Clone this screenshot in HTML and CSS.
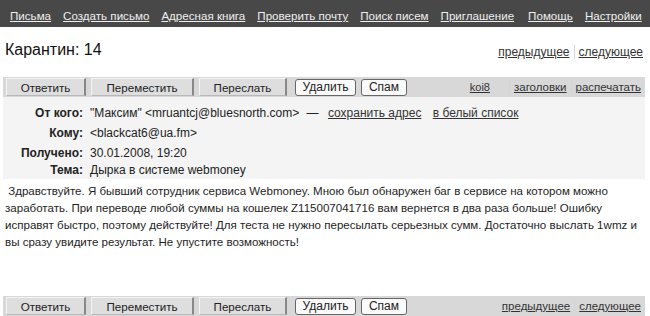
FILE: index.html
```html
<!DOCTYPE html>
<html lang="ru">
<head>
<meta charset="utf-8">
<title>Карантин</title>
<link rel="stylesheet" href="styles.css">
</head>
<body>
<div class="nav">
  <a href="#">Письма</a>
  <a href="#">Создать письмо</a>
  <a href="#">Адресная книга</a>
  <a href="#">Проверить почту</a>
  <a href="#">Поиск писем</a>
  <a href="#">Приглашение</a>
  <a href="#" class="help">Помощь</a>
  <a href="#">Настройки</a>
</div>
<div class="titlebar">
  <h1 class="title">Карантин: 14</h1>
  <div class="pager">
    <a href="#">предыдущее</a><span class="sep"></span><a href="#">следующее</a>
  </div>
</div>
<div class="toolbar">
  <div class="btns">
    <span class="btn gray w1">Ответить</span>
    <span class="btn gray w2">Переместить</span>
    <span class="btn gray w3">Переслать</span>
    <span class="btn white w4">Удалить</span>
    <span class="btn white w5">Спам</span>
  </div>
  <div class="tools">
    <a href="#" class="koi">koi8</a><span class="sep"></span><a href="#">заголовки</a><span class="sep"></span><a href="#">распечатать</a>
  </div>
</div>
<div class="headers">
  <div class="row"><span class="lbl">От кого:</span><span class="val">"Максим" &lt;mruantcj@bluesnorth.com&gt; <span class="dash">—</span> <a href="#">сохранить адрес</a> <a href="#" class="wl">в белый список</a></span></div>
  <div class="row"><span class="lbl">Кому:</span><span class="val">&lt;blackcat6@ua.fm&gt;</span></div>
  <div class="row"><span class="lbl">Получено:</span><span class="val">30.01.2008, 19:20</span></div>
  <div class="row last"><span class="lbl">Тема:</span><span class="val">Дырка в системе webmoney</span></div>
</div>
<div class="body">
  <p class="line">&nbsp;Здравствуйте. Я бывший сотрудник сервиса Webmoney. Мною был обнаружен баг в сервисе на котором можно</p>
  <p class="line">заработать. При переводе любой суммы на кошелек Z115007041716 вам вернется в два раза больше! Ошибку</p>
  <p class="line">исправят быстро, поэтому действуйте! Для теста не нужно пересылать серьезных сумм. Достаточно выслать 1wmz и</p>
  <p class="line">вы сразу увидите результат. Не упустите возможность!</p>
</div>
<div class="toolbar bottom">
  <div class="btns">
    <span class="btn gray w1">Ответить</span>
    <span class="btn gray w2">Переместить</span>
    <span class="btn gray w3">Переслать</span>
    <span class="btn white w4">Удалить</span>
    <span class="btn white w5">Спам</span>
  </div>
  <div class="tools">
    <a href="#">предыдущее</a><span class="sep"></span><a href="#">следующее</a>
  </div>
</div>
</body>
</html>
```
FILE: styles.css
```css
html, body {
  margin: 0;
  padding: 0;
  background: #fff;
}
body {
  font-family: "Liberation Sans", Arial, sans-serif;
  font-size: 12px;
  color: #222;
  width: 650px;
  overflow: hidden;
}
a {
  color: #333;
  text-decoration: underline;
}
.nav {
  background: #484848;
  height: 27px;
  display: flex;
  align-items: flex-end;
  padding: 0 0 4px 10px;
  box-sizing: border-box;
  gap: 12px;
}
.nav a {
  color: #eee;
  font-size: 11.6px;
  line-height: 14px;
  white-space: nowrap;
}
.nav a.help {
  margin-left: 2px;
}
.titlebar {
  display: flex;
  justify-content: space-between;
  align-items: flex-end;
  height: 50px;
  padding: 0 7px 0 5px;
  box-sizing: border-box;
}
.title {
  margin: 0 0 18px 0;
  font-size: 16px;
  font-weight: normal;
  color: #111;
  line-height: 18px;
}
.pager {
  display: flex;
  align-items: center;
  margin-bottom: 18px;
}
.sep {
  display: inline-block;
  width: 1px;
  height: 14px;
  background: #d4d4d4;
  margin: 0 4px;
}
.toolbar {
  margin: 0 5px 0 3px;
  height: 20px;
  background: #d8d8d8;
  display: flex;
  justify-content: space-between;
  align-items: center;
}
.btns {
  display: flex;
  align-items: center;
  padding-left: 3px;
}
.btn {
  box-sizing: border-box;
  height: 18px;
  display: inline-flex;
  align-items: center;
  justify-content: center;
  font-size: 12px;
  color: #222;
  margin-right: 5px;
}
.btn.gray {
  background: #dedede;
  border-top: 1px solid #f4f4f4;
  border-left: 1px solid #f4f4f4;
  border-right: 2px solid #888;
  border-bottom: 1px solid #b8b8b8;
  font-size: 11.6px;
}
.btn.white {
  background: #fafafa;
  border: 1px solid #666;
  border-radius: 3px;
  height: 17px;
}
.w1 { width: 80px; }
.w2 { width: 103px; }
.w3 { width: 88px; margin-right: 8px; }
.w4 { width: 61px; }
.w5 { width: 46px; }
.tools {
  display: flex;
  align-items: center;
  padding-right: 4px;
  font-size: 11.5px;
}
.tools .koi {
  font-size: 11px;
  margin-right: 15px;
}
.headers {
  margin: 0 5px 0 3px;
  background: #f4f4f4;
  padding: 6px 0 3px 0;
}
.row {
  display: flex;
  align-items: center;
  height: 20px;
}
.row.last {
  height: 13px;
}
.lbl {
  width: 80px;
  text-align: right;
  font-weight: bold;
  color: #222;
}
.val {
  padding-left: 7px;
  color: #222;
}
.dash {
  margin: 0 4px;
}
.val a {
  margin-left: 2px;
}
.val a.wl {
  margin-left: 8px;
}
.body {
  padding: 4px 5px 0 5px;
  height: 105px;
  color: #1e1e1e;
  font-size: 11.55px;
}
.line {
  margin: 0;
  line-height: 17px;
  white-space: nowrap;
}
.bottom {
  margin-top: 8px;
}
```
